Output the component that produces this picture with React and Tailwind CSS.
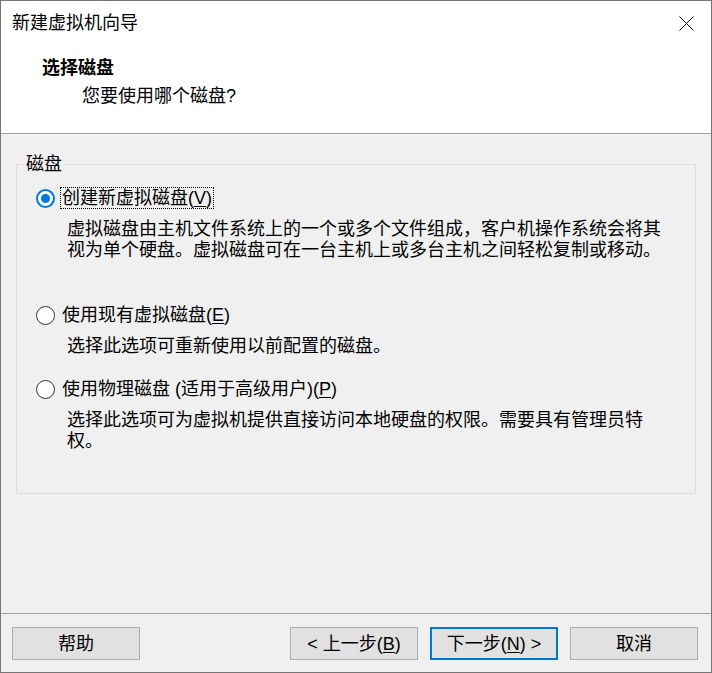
import { useState } from 'react';

const font = { fontFamily: '"Liberation Sans", "Noto Sans CJK SC", sans-serif' };

function Radio({ checked }) {
  if (checked) {
    return (
      <span className="w-[19px] h-[19px] rounded-full border-2 border-[#0078d7] bg-white flex items-center justify-center shrink-0">
        <span className="w-[9px] h-[9px] rounded-full bg-[#0078d7]" />
      </span>
    );
  }
  return <span className="w-[19px] h-[19px] rounded-full border-[1.5px] border-[#333333] bg-white shrink-0" />;
}

function Option({ checked, focused, label, hotkey, after, onClick }) {
  return (
    <div className="flex items-center ml-[19px] h-[22px] cursor-default" onClick={onClick}>
      <Radio checked={checked} />
      <span
        className={`ml-[5px] px-[1px] h-[22px] leading-[20px] border border-dotted ${
          focused ? 'border-black' : 'border-transparent'
        }`}
      >
        {label}(<u className="underline underline-offset-2">{hotkey}</u>){after}
      </span>
    </div>
  );
}

function Button({ children, primary }) {
  return (
    <button
      className={`w-[128px] h-[33px] bg-[#e1e1e1] text-[18px] leading-none text-black flex items-center justify-center ${
        primary ? 'border-2 border-[#0078d7]' : 'border border-[#adadad]'
      }`}
    >
      {children}
    </button>
  );
}

export default function App() {
  const [choice, setChoice] = useState('new');

  return (
    <div className="w-[712px] h-[673px] border border-[#777777] bg-[#f0f0f0] flex flex-col text-black text-[18px]" style={font}>
      <div className="h-[133px] bg-white border-b border-[#a0a0a0] shrink-0">
        <div className="h-[44px] flex items-center justify-between pl-[11px] pr-[17px]">
          <span className="leading-[24px]">新建虚拟机向导</span>
          <svg width="15" height="15" viewBox="0 0 15 15">
            <path d="M0.5 0.5 L14.5 14.5 M14.5 0.5 L0.5 14.5" stroke="#000" strokeWidth="1" fill="none" />
          </svg>
        </div>
        <div className="pl-[41px] mt-[11px] leading-[24px] font-bold">选择磁盘</div>
        <div className="pl-[81px] mt-[4px] leading-[24px]">您要使用哪个磁盘?</div>
      </div>

      <div className="flex-1 px-[15px] pt-[18px]">
        <fieldset className="border border-[#dcdcdc] pb-[41px]">
          <legend className="ml-[7px] px-[2px] leading-[24px]">磁盘</legend>

          <div className="pt-[11px]">
            <Option checked={choice === 'new'} focused label="创建新虚拟磁盘" hotkey="V" onClick={() => setChoice('new')} />
            <p className="ml-[50px] mt-[10px] w-[600px] leading-[21px]">
              虚拟磁盘由主机文件系统上的一个或多个文件组成，客户机操作系统会将其视为单个硬盘。虚拟磁盘可在一台主机上或多台主机之间轻松复制或移动。
            </p>

            <div className="mt-[43px]">
              <Option checked={choice === 'existing'} label="使用现有虚拟磁盘" hotkey="E" onClick={() => setChoice('existing')} />
            </div>
            <p className="ml-[50px] mt-[10px] w-[600px] leading-[21px]">选择此选项可重新使用以前配置的磁盘。</p>

            <div className="mt-[21px]">
              <Option checked={choice === 'physical'} label="使用物理磁盘 (适用于高级用户)" hotkey="P" onClick={() => setChoice('physical')} />
            </div>
            <p className="ml-[50px] mt-[10px] w-[600px] leading-[21px]">
              选择此选项可为虚拟机提供直接访问本地硬盘的权限。需要具有管理员特权。
            </p>
          </div>
        </fieldset>
      </div>

      <div className="h-[59px] shrink-0 border-t border-[#a0a0a0] pt-[13px] pl-[11px] pr-[13px] flex items-start">
        <Button>帮助</Button>
        <div className="ml-auto flex gap-[12px]">
          <Button>&lt; 上一步(<u className="underline underline-offset-2">B</u>)</Button>
          <Button primary>下一步(<u className="underline underline-offset-2">N</u>) &gt;</Button>
          <Button>取消</Button>
        </div>
      </div>
    </div>
  );
}
